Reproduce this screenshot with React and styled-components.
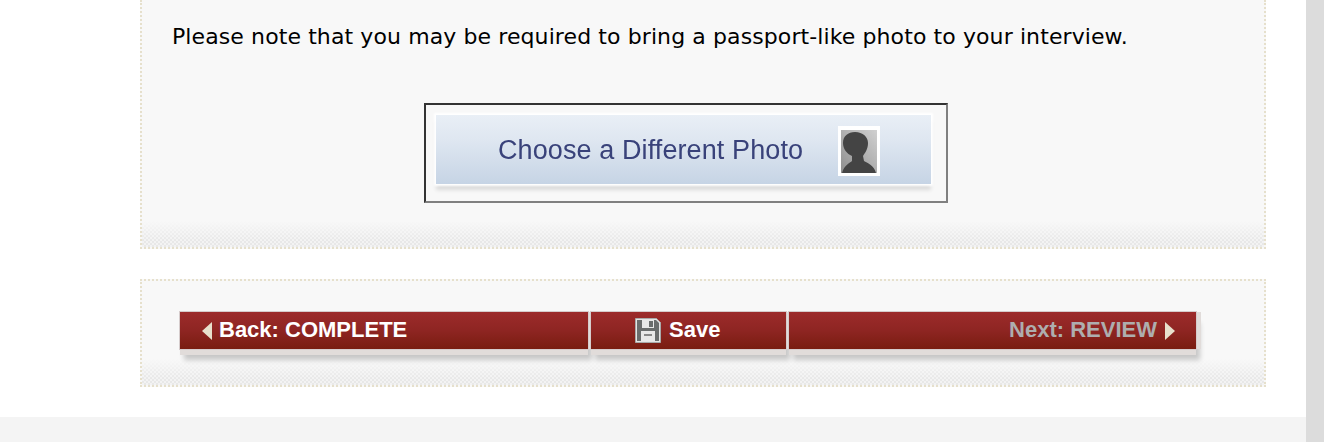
import React from 'react';
import styled, { createGlobalStyle } from 'styled-components';

const Global = createGlobalStyle`
  html, body { margin: 0; padding: 0; height: 442px; overflow: hidden; background: #fff; }
  #root { height: 442px; }
`;
const Page = styled.div`
  display: flex;
  width: 1324px;
  height: 442px;
`;
const Main = styled.main`
  width: 1306px;
  display: flex;
  flex-direction: column;
`;
const Content = styled.div`
  height: 417px;
  padding-left: 140px;
  display: flex;
  flex-direction: column;
  gap: 30px;
  background: #fff;
`;
const Footer = styled.footer`
  height: 25px;
  background: #f4f4f4;
`;
const Scrollbar = styled.div`
  width: 18px;
  background: #dcdcdc;
`;
const Panel = styled.section`
  box-sizing: border-box;
  width: 1126px;
  height: ${p => p.$height}px;
  border: 2px dotted #e6e0cc;
  border-top: ${p => (p.$open ? 'none' : '2px dotted #e6e0cc')};
  background: #f8f8f8;
  display: flex;
  flex-direction: column;
`;
const PanelInner = styled.div`
  flex: 1;
  box-sizing: border-box;
  padding: ${p => p.$padding};
`;
const Texture = styled.div`
  height: 26px;
  flex: none;
  background:
    linear-gradient(to bottom, #f8f8f8 0%, rgba(248,248,248,0) 75%),
    repeating-conic-gradient(#e8e8e8 0 25%, #f3f3f3 0 50%) 0 0 / 4px 4px;
`;
const Note = styled.p`
  margin: 0;
  font: 22px/28px "DejaVu Sans", Verdana, sans-serif;
  letter-spacing: .1px;
  color: #000;
  white-space: nowrap;
`;
const PhotoRow = styled.div`
  display: flex;
  justify-content: center;
  margin: 52px 0 0 -31px;
  padding-right: 33px;
`;
const PhotoButton = styled.button`
  box-sizing: border-box;
  width: 524px;
  height: 100px;
  padding: 10px 15px 17px 10px;
  border: 2px solid;
  border-color: #333 #808080 #808080 #333;
  background: #f8f8f8;
  display: flex;
  cursor: pointer;
`;
const PhotoFace = styled.span`
  flex: 1;
  display: flex;
  align-items: center;
  box-sizing: border-box;
  padding: 2px 0 0 62px;
  background: linear-gradient(to bottom, #e9eff6 0%, #dfe7f1 35%, #c6d4e5 100%);
  box-shadow: 0 0 2px 2px #fff, 0 6px 4px 0 rgba(0,0,0,.12);
`;
const PhotoLabel = styled.span`
  font: 27px "Liberation Sans", Arial, sans-serif;
  letter-spacing: .1px;
  color: #39427a;
  white-space: nowrap;
  filter: blur(.35px);
`;
const Portrait = styled.svg`
  width: 42px;
  height: 50px;
  margin-left: 35px;
  flex: none;
  filter: blur(.5px);
`;
const NavBar = styled.nav`
  display: flex;
  gap: 3px;
  margin-left: 38px;
  width: 1016px;
  position: relative;
  z-index: 1;
`;
const NavButton = styled.a`
  box-sizing: border-box;
  width: ${p => p.$w}px;
  height: 37px;
  display: flex;
  align-items: center;
  justify-content: ${p => p.$justify};
  gap: ${p => p.$gap}px;
  padding: ${p => p.$pad};
  background: linear-gradient(to bottom, #9c2b2b 0%, #8e2522 50%, #791c10 100%);
  box-shadow: 0 0 0 1px #d6cccc, 5px 0 0 #e1dcda, 0 6px 0 0 #e1dcda, 4px 11px 5px 0 rgba(0,0,0,.2);
  font: bold 22px/26px "Liberation Sans", Arial, sans-serif;
  color: ${p => p.$color};
  white-space: nowrap;
  padding-bottom: 2px;
`;
const Arrow = styled.svg`
  width: 11px;
  height: 20px;
  flex: none;
  margin-top: 3px;
`;
const Disk = styled.svg`
  width: 26px;
  height: 25px;
  flex: none;
  margin-top: 2px;
`;

export default function App() {
  return (
    <Page>
      <Global />
      <Main>
        <Content>
          <Panel $open $height={249}>
            <PanelInner $padding="23px 0 0 30px">
              <Note>Please note that you may be required to bring a passport-like photo to your interview.</Note>
              <PhotoRow>
                <PhotoButton type="button">
                  <PhotoFace>
                    <PhotoLabel>Choose a Different Photo</PhotoLabel>
                    <Portrait viewBox="0 0 42 50">
                      <defs>
                        <linearGradient id="portraitBg" x1="1" y1="0" x2="0" y2="1">
                          <stop offset="0" stopColor="#d0d0d0" />
                          <stop offset="1" stopColor="#8e8e8e" />
                        </linearGradient>
                      </defs>
                      <rect width="42" height="50" fill="#fff" />
                      <rect x="3" y="4" width="36" height="43" fill="url(#portraitBg)" />
                      <path d="M17 6c8 0 13 5 13 11 0 6-3 10-5 13l1 5c3 2 10 4 12 12H4c2-8 8-10 10-12v-5C9 28 5 23 5 17 5 10 10 6 17 6z" fill="#444" />
                    </Portrait>
                  </PhotoFace>
                </PhotoButton>
              </PhotoRow>
            </PanelInner>
            <Texture />
          </Panel>
          <Panel $height={108}>
            <PanelInner $padding="31px 0 0 0">
              <NavBar>
                <NavButton $w={408} $justify="flex-start" $gap={7} $pad="0 0 0 21px" $color="#fff">
                  <Arrow viewBox="0 0 11 20"><path d="M11 1v18L1 10z" fill="#e8e0cc" /></Arrow>
                  Back: COMPLETE
                </NavButton>
                <NavButton $w={195} $justify="flex-start" $gap={8} $pad="0 0 0 44px" $color="#fff">
                  <Disk viewBox="0 0 26 25">
                    <path d="M.5.5h21l4 4v20H.5z" fill="#e4e4e4" stroke="#a9a9a9" />
                    <path d="M2 2h19l3 3v18H2z" fill="#6a6d6d" />
                    <rect x="7" y="2" width="12" height="8" fill="#e8e8e8" />
                    <rect x="14" y="3" width="4" height="6" fill="#6a6d6d" />
                    <rect x="6" y="13" width="14" height="10" fill="#e8e8e8" />
                    <rect x="9" y="16" width="8" height="2" fill="#888" />
                  </Disk>
                  Save
                </NavButton>
                <NavButton $w={407} $justify="flex-end" $gap={8} $pad="0 20px 0 0" $color="#aeaeae">
                  Next: REVIEW
                  <Arrow viewBox="0 0 11 20"><path d="M0 1v18l10-9z" fill="#e8e0cc" /></Arrow>
                </NavButton>
              </NavBar>
            </PanelInner>
            <Texture />
          </Panel>
        </Content>
        <Footer />
      </Main>
      <Scrollbar />
    </Page>
  );
}
